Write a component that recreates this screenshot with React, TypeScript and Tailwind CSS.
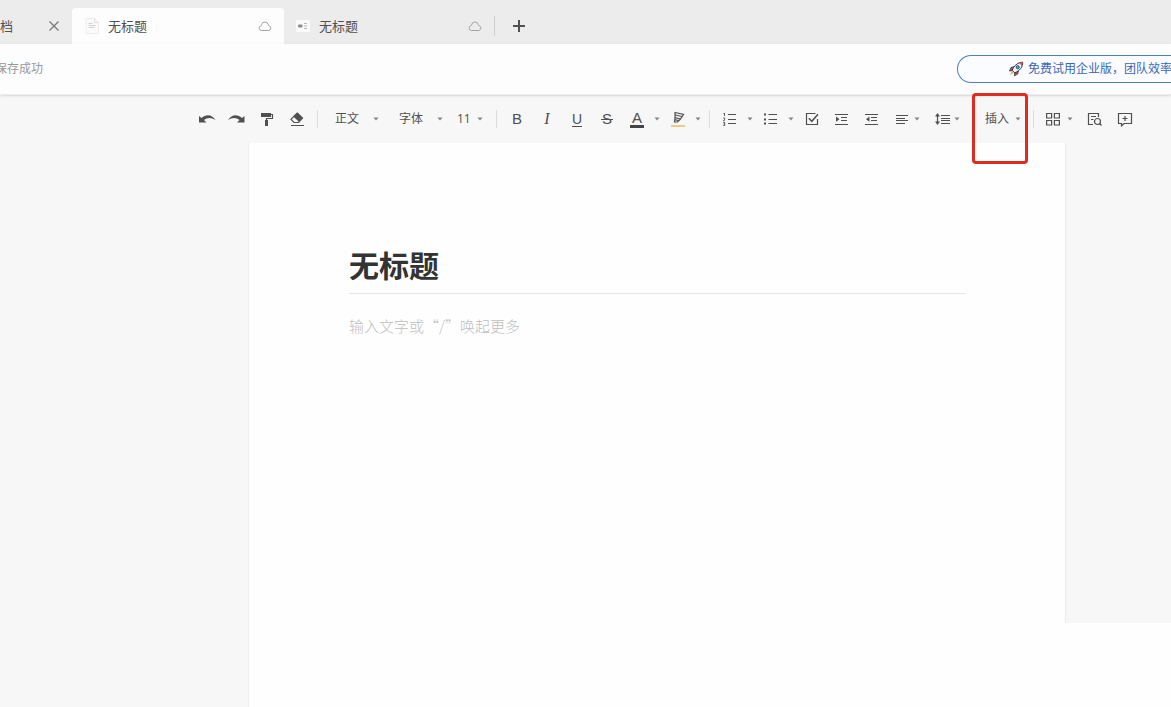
import { useState } from "react";
import type { ReactNode } from "react";
import clsx from "clsx";

interface IconProps {
  children: ReactNode;
  width?: number;
  height?: number;
}

function Icon({ children, width = 16, height = 16 }: IconProps) {
  return (
    <svg
      width={width}
      height={height}
      viewBox={`0 0 ${width} ${height}`}
      fill="none"
      stroke="currentColor"
      strokeWidth="1.2"
      aria-hidden="true"
      className="shrink-0"
    >
      {children}
    </svg>
  );
}

function Caret() {
  return (
    <svg width="6" height="4" viewBox="0 0 6 4" aria-hidden="true" className="shrink-0 text-[#858585]">
      <path d="M0.5 0.5h5L3 3.5z" fill="currentColor" />
    </svg>
  );
}

function CloudIcon() {
  return (
    <svg width="14" height="12" viewBox="0 0 14 12" fill="none" stroke="#a3a3a3" aria-hidden="true">
      <path d="M3.4 10.5h7.2a2.4 2.4 0 0 0 .5-4.7 1 1 0 0 1-.8-1 3.4 3.4 0 0 0-6.7 0 1 1 0 0 1-.8 1 2.4 2.4 0 0 0 .6 4.7z" />
    </svg>
  );
}

function DocIcon() {
  return (
    <svg width="14" height="16" viewBox="0 0 14 16" fill="none" aria-hidden="true">
      <path d="M1 .5h8.5l4 4v11H1z" fill="#fafafa" stroke="#ececec" />
      <path d="M9.5.5v4h4" stroke="#e2e2e2" />
      <path d="M3.5 5.5h4M3.5 7.5h7M3.5 9.5h6" stroke="#d2d2d2" />
    </svg>
  );
}

function SlideIcon() {
  return (
    <svg width="14" height="12" viewBox="0 0 14 12" fill="none" aria-hidden="true">
      <rect width="14" height="12" rx="1" fill="#fafafa" />
      <rect x="2" y="4.5" width="4.5" height="3" rx="1" fill="#8d8d8d" />
      <path d="M8 3.5h3M8 6h3M8 8.5h3" stroke="#b5b5b5" />
    </svg>
  );
}

function Rocket() {
  return (
    <svg width="16" height="16" viewBox="0 0 16 16" aria-hidden="true" className="shrink-0">
      <path d="M6.5 5.500 3 6.500 1.500 10l4-.5z" fill="#d9483b" stroke="#26334d" strokeWidth=".8" />
      <path d="m10.500 9.500-.8 3.500-3.200 1.800.2-4z" fill="#d9483b" stroke="#26334d" strokeWidth=".8" />
      <path d="M4.200 9.500C5.500 5 9.500 1.500 14.700 1.200c.3 4.800-3.200 8.800-8 10.600z" fill="#eaf5fb" stroke="#26334d" />
      <path d="M11.300 2.100c1-.5 2.100-.8 3.400-.9 0 1.400-.2 2.600-.8 3.700z" fill="#e2513e" />
      <circle cx="9.700" cy="6.200" r="1.600" fill="#3fa4cf" stroke="#26334d" strokeWidth=".7" />
      <path d="m4.200 10.200-2.400 3.900 4-2.300z" fill="#f3a53a" />
    </svg>
  );
}

const icons = {
  undo: (
    <Icon width={18}>
      <path d="M1 5v6.500h7.500L6 9c3-2.700 7.500-2.900 11.500 0C14 3.200 8 2.700 3.500 7z" fill="currentColor" stroke="none" />
    </Icon>
  ),
  redo: (
    <Icon width={18}>
      <path d="M16.500 5v6.500H9L11.500 9C8.500 6.300 4 6.100 0 9c3.500-5.800 9.500-6.300 14-2z" fill="currentColor" stroke="none" />
    </Icon>
  ),
  painter: (
    <Icon>
      <path d="M2 2h10v4H2zM6 9h3v6H6z" fill="currentColor" stroke="none" />
      <path d="M12 3.500h1.500v4h-6V9" />
    </Icon>
  ),
  eraser: (
    <Icon>
      <path d="M8.200 2 13.500 7l-3.100 3.500-5.500-5.200z" fill="currentColor" stroke="currentColor" />
      <path d="M4.900 5.300 2 8.300l3 3.200h4.500l.9-1M2 14.500h13" />
    </Icon>
  ),
  highlight: (
    <Icon>
      <path d="m5 1.500 8.500 2L10.500 8 5 6.500zM5 6.500l-.5 4.500h3l3-3M4.800 8.700l3.500.8M5.500 4l6.200 1.500" />
      <path d="M1 15h14" stroke="#e6cf85" strokeWidth="2" />
    </Icon>
  ),
  ordered: (
    <Icon>
      <path d="M6 3.500h8M6 8.500h8M6 12.500h8" />
      <path d="M1.500 3 2.500 2v3M1.200 7h1.500v1.200L1.300 9.700h1.500M1.200 11.500h1.500v3H1.200M1.500 13h1.200" strokeWidth=".9" />
    </Icon>
  ),
  bullets: (
    <Icon>
      <path d="M5.500 3.500H14M5.500 8.500H14M5.500 12.500H14" />
      <path d="M1 2.500h2v2H1zM1 7.500h2v2H1zM1 11.500h2v2H1z" fill="currentColor" stroke="none" />
    </Icon>
  ),
  check: (
    <Icon>
      <path d="M13.500 8v5.500h-11v-11h9" />
      <path d="m4.800 7.300 3 3 6.200-7" strokeWidth="1.500" />
    </Icon>
  ),
  indent: (
    <Icon>
      <path d="M1 3.500h13M7 6.500h6M7 9.500h6M1 13.500h13" />
      <path d="M2 5.500 5.500 8.200 2 10.800z" fill="currentColor" stroke="none" />
    </Icon>
  ),
  outdent: (
    <Icon>
      <path d="M1 3.500h13M7 6.500h6M7 9.500h6M1 13.500h13" />
      <path d="M5.500 5.500 2 8.200l3.500 2.600z" fill="currentColor" stroke="none" />
    </Icon>
  ),
  align: (
    <Icon width={14}>
      <path d="M1 4.500h12M1 7.500h9M1 9.500h12M1 12.500h9" />
    </Icon>
  ),
  lineHeight: (
    <Icon>
      <path d="M7 4.500h9M7 7.500h9M7 9.500h9M7 12.500h9M3.500 4v8" />
      <path d="M3.500 2 6 5.500H1zM3.500 14 6 10.500H1z" fill="currentColor" stroke="none" />
    </Icon>
  ),
  grid: (
    <Icon width={14}>
      <path d="M.6 2.500h5v4.500h-5zM8.400 2.500h5v4.500h-5zM.6 9.500h5V14h-5zM8.400 9.500h5V14h-5z" />
    </Icon>
  ),
  find: (
    <Icon>
      <path d="M6 13.500H1.500v-11h10V6M4 5.500h5M4 8.500h2.500" />
      <circle cx="10.500" cy="10.500" r="3" />
      <path d="m12.500 12.500 2 2" />
    </Icon>
  ),
  comment: (
    <Icon>
      <path d="M1.500 2.500h13v10H7l-2.500 2.300v-2.300h-3zM8 5v5M5.500 7.500h5" />
    </Icon>
  ),
};

function ToolButton({ label, children }: { label: string; children: ReactNode }) {
  return (
    <button type="button" aria-label={label} className="flex h-8 w-[30px] shrink-0 items-center justify-center">
      {children}
    </button>
  );
}

function SplitButton({ label, children }: { label: string; children: ReactNode }) {
  return (
    <div className="mr-px flex shrink-0">
      <ToolButton label={label}>{children}</ToolButton>
      <button type="button" aria-label={`${label}选项`} className="flex w-[10px] items-center justify-center">
        <Caret />
      </button>
    </div>
  );
}

function Separator() {
  return <div className="mx-[5px] h-[18px] w-px shrink-0 bg-[#dcdcdc]" />;
}

interface ToolSelectProps {
  label: string;
  options: string[];
  className: string;
}

function ToolSelect({ label, options, className }: ToolSelectProps) {
  return (
    <div className={clsx("relative flex h-8 shrink-0 items-center", className)}>
      <select aria-label={label} className="w-full appearance-none bg-transparent text-xs outline-none">
        {options.map((option) => (
          <option key={option}>{option}</option>
        ))}
      </select>
      <div className="pointer-events-none absolute right-0">
        <Caret />
      </div>
    </div>
  );
}

interface TabProps {
  title: string;
  icon: ReactNode;
  active?: boolean;
}

function Tab({ title, icon, active }: TabProps) {
  return (
    <button
      type="button"
      className={clsx(
        "flex h-9 shrink-0 items-center pr-3 text-[13px] leading-5 text-[#505050]",
        active ? "w-[212px] rounded-t bg-[#fdfdfd] pl-[13px]" : "w-[210px] pl-3"
      )}
    >
      {icon}
      <span className="ml-[9px] flex-1 text-left">{title}</span>
      <CloudIcon />
    </button>
  );
}

function TabBar() {
  return (
    <nav className="flex h-11 items-end bg-[#ececec]">
      <div className="flex h-9 w-[72px] shrink-0 items-center justify-between pr-3 text-[13px] leading-5 text-[#505050]">
        <span>档</span>
        <button type="button" aria-label="关闭">
          <Icon width={12} height={12}>
            <path d="m1.500 1.500 9 9M10.500 1.500l-9 9" stroke="#777" />
          </Icon>
        </button>
      </div>
      <Tab title="无标题" icon={<DocIcon />} active />
      <Tab title="无标题" icon={<SlideIcon />} />
      <div className="mb-2 h-5 w-px bg-[#cfcfcf]" />
      <button type="button" aria-label="新建标签" className="flex h-9 w-12 items-center justify-center text-[#505050]">
        <Icon width={12} height={12}>
          <path d="M6 0v12M0 6h12" strokeWidth="2" />
        </Icon>
      </button>
    </nav>
  );
}

function Header() {
  return (
    <header className="relative flex h-[51px] items-center justify-between overflow-hidden border-b border-[#ececec] bg-[#fdfdfd] text-xs shadow-sm">
      <span className="-ml-[5px] text-[#999]">保存成功</span>
      <a
        href="#trial"
        className="-mr-px flex h-7 items-center gap-1 rounded-l-full border border-r-0 border-[#4f80bd] bg-[#fafcff] pl-[50px] whitespace-nowrap text-[#3d65b5]"
      >
        <Rocket />
        免费试用企业版，团队效率
      </a>
    </header>
  );
}

function Toolbar() {
  return (
    <div
      role="toolbar"
      aria-label="格式"
      className="flex h-12 items-center bg-[#f7f7f7] pl-[192px] text-xs text-[#505050]"
    >
      <ToolButton label="撤销">{icons.undo}</ToolButton>
      <ToolButton label="重做">{icons.redo}</ToolButton>
      <ToolButton label="格式刷">{icons.painter}</ToolButton>
      <ToolButton label="清除格式">{icons.eraser}</ToolButton>
      <Separator />
      <ToolSelect label="样式" options={["正文", "标题"]} className="ml-3 w-11" />
      <ToolSelect label="字体" options={["字体"]} className="ml-5 w-11" />
      <ToolSelect label="字号" options={["11", "12", "14"]} className="mr-2 ml-[14px] w-[26px]" />
      <Separator />
      <ToolButton label="加粗">
        <span className="font-['Liberation_Sans'] text-[15px]">B</span>
      </ToolButton>
      <ToolButton label="斜体">
        <span className="font-['Liberation_Serif'] text-base italic">I</span>
      </ToolButton>
      <ToolButton label="下划线">
        <span className="border-b border-[#505050] font-['Liberation_Sans'] text-sm leading-[14px]">U</span>
      </ToolButton>
      <ToolButton label="删除线">
        <span className="relative px-px font-['Liberation_Sans'] text-[15px] leading-4">
          S
          <span className="absolute inset-x-0 top-1/2 h-px bg-[#505050]" />
        </span>
      </ToolButton>
      <SplitButton label="文字颜色">
        <span className="w-[14px] border-b-[3px] border-[#444] font-['Liberation_Sans'] text-[15px] leading-[15px]">
          A
        </span>
      </SplitButton>
      <SplitButton label="高亮">{icons.highlight}</SplitButton>
      <Separator />
      <SplitButton label="有序列表">{icons.ordered}</SplitButton>
      <SplitButton label="无序列表">{icons.bullets}</SplitButton>
      <ToolButton label="待办">{icons.check}</ToolButton>
      <ToolButton label="增加缩进">{icons.indent}</ToolButton>
      <ToolButton label="减少缩进">{icons.outdent}</ToolButton>
      <button type="button" aria-label="对齐" className="flex h-8 shrink-0 items-center gap-[5px] pl-2">
        {icons.align}
        <Caret />
      </button>
      <button type="button" aria-label="行高" className="flex h-8 shrink-0 items-center gap-1 pl-[14px]">
        {icons.lineHeight}
        <Caret />
      </button>
      <div className="relative ml-3 shrink-0">
        <button type="button" className="flex h-8 w-14 items-center gap-[6px] pl-[13px]">
          插入
          <Caret />
        </button>
        {/* callout frame around the insert menu */}
        <div className="pointer-events-none absolute inset-x-0 -top-[10px] z-10 h-[71px] rounded border-[3px] border-[#e02b20]" />
      </div>
      <Separator />
      <button type="button" aria-label="模板" className="flex h-8 shrink-0 items-center gap-[7px] px-[7px]">
        {icons.grid}
        <Caret />
      </button>
      <ToolButton label="查找">{icons.find}</ToolButton>
      <ToolButton label="评论">{icons.comment}</ToolButton>
    </div>
  );
}

function App() {
  const [title, setTitle] = useState("无标题");

  return (
    <div className="flex min-h-screen flex-col overflow-x-hidden bg-[#fefefe] font-['Open_Sans','Noto_Sans_CJK_SC',sans-serif]">
      <TabBar />
      <Header />
      <Toolbar />
      <div className="flex flex-1 items-stretch">
        <div className="w-[249px] shrink-0 border-r border-[#efefef] bg-[#f7f7f7]" />
        <main className="w-[816px] shrink-0 px-[100px] pt-[100px]">
          <input
            aria-label="标题"
            value={title}
            onChange={(e) => setTitle(e.target.value)}
            className="block h-[51px] w-full border-b border-[#e5e5e5] pb-2 text-3xl font-bold text-[#333] outline-none"
          />
          <textarea
            aria-label="正文内容"
            placeholder="输入文字或“/”唤起更多"
            className="mt-5 block h-60 w-full resize-none font-['Noto_Sans_CJK_SC',sans-serif] text-[15px] leading-6 font-light outline-none placeholder:text-[#bfbfbf]"
          />
        </main>
        <div className="h-[480px] flex-1 border-l border-[#ececec] bg-[#f7f7f7]" />
      </div>
    </div>
  );
}

export default App;
